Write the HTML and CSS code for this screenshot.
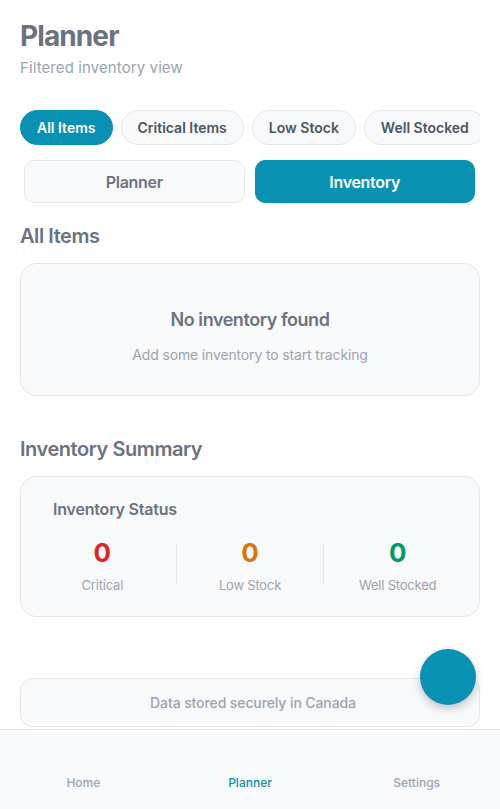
FILE: index.html
```html
<!DOCTYPE html>
<html lang="en">
<head>
<meta charset="utf-8">
<title>Planner</title>
<link rel="stylesheet" href="styles.css">
</head>
<body>
<div class="app">
  <main class="content">
    <header class="header">
      <h1 class="title">Planner</h1>
      <p class="subtitle">Filtered inventory view</p>
    </header>

    <div class="chips">
      <button class="chip chip-active">All Items</button>
      <button class="chip">Critical Items</button>
      <button class="chip">Low Stock</button>
      <button class="chip">Well Stocked</button>
    </div>

    <div class="tabs">
      <button class="tab">Planner</button>
      <button class="tab tab-active">Inventory</button>
    </div>

    <h2 class="section-title first">All Items</h2>
    <div class="card empty">
      <div class="empty-title">No inventory found</div>
      <div class="empty-text">Add some inventory to start tracking</div>
    </div>

    <h2 class="section-title">Inventory Summary</h2>
    <div class="card summary">
      <div class="summary-title">Inventory Status</div>
      <div class="stats">
        <div class="stat">
          <div class="stat-value critical">0</div>
          <div class="stat-label">Critical</div>
        </div>
        <div class="divider"></div>
        <div class="stat">
          <div class="stat-value low">0</div>
          <div class="stat-label">Low Stock</div>
        </div>
        <div class="divider"></div>
        <div class="stat">
          <div class="stat-value well">0</div>
          <div class="stat-label">Well Stocked</div>
        </div>
      </div>
    </div>

    <div class="card footer-note">Data stored securely in Canada</div>
  </main>

  <nav class="nav">
    <div class="nav-item">Home</div>
    <div class="nav-item nav-active">Planner</div>
    <div class="nav-item">Settings</div>
  </nav>

  <button class="fab" aria-label="Add"></button>
</div>
</body>
</html>
```

FILE: styles.css
```css
* { box-sizing: border-box; }

html, body {
  margin: 0;
  padding: 0;
  height: 100%;
}

body {
  font-family: Inter, "Noto Sans", "Liberation Sans", sans-serif;
  background: #ffffff;
  color: #6b7280;
}

.app {
  position: relative;
  height: 100vh;
  display: flex;
  flex-direction: column;
  overflow: hidden;
}

.content {
  flex: 1;
  overflow: hidden;
  padding: 19px 20px 0;
}

.title {
  margin: 0;
  font-size: 28px;
  line-height: 34px;
  font-weight: 700;
  color: #6b7280;
  letter-spacing: -0.9px;
}

.subtitle {
  margin: 5px 0 0;
  font-size: 15px;
  line-height: 20px;
  color: #9ca3af;
  letter-spacing: 0.1px;
}

.chips {
  display: flex;
  gap: 8px;
  margin-top: 32px;
  overflow: hidden;
}

.chip {
  flex-shrink: 0;
  height: 35px;
  padding: 0 16px;
  border-radius: 18px;
  border: 1px solid #e5e7eb;
  background: #f9fafb;
  color: #4b5563;
  font-family: inherit;
  font-size: 14px;
  font-weight: 600;
}

.chip-active {
  background: #0891b2;
  border-color: #0891b2;
  color: #ffffff;
}

.tabs {
  display: flex;
  gap: 10px;
  margin-top: 15px;
  padding: 0 5px 0 4px;
}

.tab {
  flex: 1;
  height: 43px;
  border-radius: 10px;
  border: 1px solid #e5e7eb;
  background: #f9fafb;
  color: #6b7280;
  font-family: inherit;
  font-size: 16px;
  font-weight: 600;
  letter-spacing: -0.3px;
}

.tab-active {
  background: #0891b2;
  border-color: #0891b2;
  color: #ffffff;
}

.section-title {
  margin: 39px 0 13px;
  font-size: 20px;
  line-height: 28px;
  font-weight: 600;
  color: #6b7280;
  letter-spacing: -0.45px;
}

.section-title.first {
  margin-top: 19px;
}

.card {
  background: #f9fafb;
  border: 1px solid #e5e7eb;
  border-radius: 16px;
}

.empty {
  height: 133px;
  padding-top: 43px;
  text-align: center;
}

.empty-title {
  font-size: 18px;
  line-height: 26px;
  font-weight: 600;
  color: #6b7280;
  letter-spacing: -0.45px;
}

.empty-text {
  margin-top: 12px;
  font-size: 14px;
  line-height: 20px;
  color: #9ca3af;
  letter-spacing: -0.15px;
}

.summary {
  height: 141px;
  padding: 20px 8px 0;
}

.summary-title {
  padding-left: 24px;
  font-size: 16px;
  line-height: 24px;
  font-weight: 600;
  color: #6b7280;
  letter-spacing: -0.2px;
}

.stats {
  display: flex;
  align-items: center;
  margin-top: 16px;
}

.stat {
  flex: 1;
  text-align: center;
}

.divider {
  width: 1px;
  height: 40px;
  background: #e5e7eb;
  margin-top: -4px;
}

.stat-value {
  font-size: 26px;
  line-height: 32px;
  font-weight: 700;
}

.stat-value.critical { color: #dc2626; }
.stat-value.low { color: #d97706; }
.stat-value.well { color: #059669; }

.stat-label {
  margin-top: 7px;
  font-size: 13px;
  line-height: 18px;
  color: #9ca3af;
  letter-spacing: -0.2px;
}

.footer-note {
  margin-top: 61px;
  height: 49px;
  border-radius: 12px;
  display: flex;
  align-items: center;
  justify-content: center;
  padding-left: 6px;
  font-size: 14px;
  font-weight: 500;
  color: #9ca3af;
  letter-spacing: -0.1px;
}

.nav {
  flex-shrink: 0;
  height: 80px;
  display: flex;
  background: #f9fafb;
  border-top: 1px solid #e5e7eb;
  padding-top: 45px;
}

.nav-item {
  flex: 1;
  text-align: center;
  font-size: 12px;
  line-height: 16px;
  font-weight: 500;
  color: #9ca3af;
}

.nav-active {
  color: #0891b2;
}

.fab {
  position: absolute;
  right: 24px;
  bottom: 104px;
  width: 56px;
  height: 56px;
  border-radius: 50%;
  border: none;
  background: #0891b2;
  box-shadow: 0 4px 10px rgba(0, 0, 0, 0.22);
}
```
